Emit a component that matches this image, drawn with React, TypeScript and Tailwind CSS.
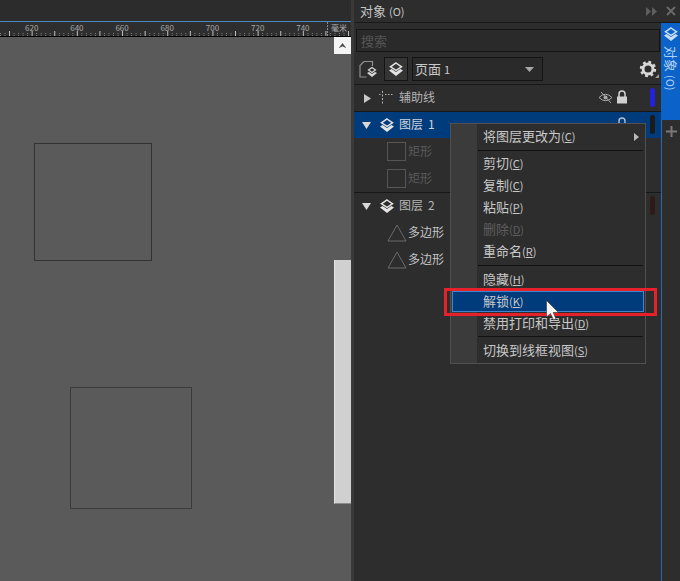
const FONT = 'font-["Noto_Sans_CJK_SC","Noto_Sans",sans-serif]';

function Layers({ className = "", color = "#e4e4e4" }: { className?: string; color?: string }) {
  return (
    <svg width="16" height="15" viewBox="0 0 16 15" className={className}>
      <path d="M8 1 L13.5 4.8 L8 8.4 L2.5 4.8 Z" fill="none" stroke={color} strokeWidth="1.5" />
      <path d="M1 8.6 L3.6 6.9 L8 9.9 L12.4 6.9 L15 8.6 L8 14 Z" fill={color} />
    </svg>
  );
}

function Ruler() {
  const labels = [620, 640, 660, 680, 700, 720, 740];
  return (
    <div className="relative h-[15px] bg-[#2e2e2e] border-b border-black overflow-hidden">
      {labels.map((l, i) => (
        <span
          key={l}
          className="absolute top-[1px] text-[8px] leading-[10px] text-[#a8a8a8]"
          style={{ left: 25 + i * 45.2 }}
        >
          {l}
        </span>
      ))}
      <svg width="351" height="15" className="absolute left-0 top-0">
        {Array.from({ length: 78 }).map((_, i) => (
          <line
            key={i}
            x1={i * 4.52 + 0.5}
            x2={i * 4.52 + 0.5}
            y1={i % 5 === 2 ? 9 : 11}
            y2={14}
            stroke={i % 5 === 2 ? "#c0c0c0" : "#808080"}
            strokeWidth="1"
            strokeDasharray={i % 5 === 2 ? undefined : "1 1"}
          />
        ))}
        <line x1="327.5" x2="327.5" y1="0" y2="15" stroke="#8a8a8a" strokeDasharray="2 1" />
      </svg>
      <span className="absolute left-[331px] top-[0px] text-[8px] leading-[11px] text-[#b4b4b4] bg-[#2e2e2e]">毫米</span>
    </div>
  );
}

function Canvas() {
  return (
    <div className="relative flex-1 bg-[#5a5a5a]">
      <div className="absolute left-[34px] top-[106px] w-[118px] h-[118px] border border-[#333]" />
      <div className="absolute left-[70px] top-[350px] w-[122px] h-[122px] border border-[#3a3a3a]" />
      <div className="absolute right-0 top-0 w-[17px] h-[17px] bg-[#f4f4f4] flex items-center justify-center">
        <svg width="7" height="5" viewBox="0 0 7 5">
          <path d="M0.5 4.5 L3.5 0.5 L6.5 4.5 L3.5 3 Z" fill="#444" stroke="#444" strokeWidth="0.6" />
        </svg>
      </div>
      <div className="absolute right-0 top-[223px] w-[17px] h-[244px] bg-[#d0d0d0] border-l border-[#e4e4e4] border-b-[#8a8a8a] border-b" />
    </div>
  );
}

function Row({
  h,
  blue,
  arrow,
  icon,
  label,
  num,
  labelCls,
  bar,
  right,
}: {
  h: string;
  blue?: boolean;
  arrow?: "right" | "down";
  icon: React.ReactNode;
  label: string;
  num?: string;
  labelCls: string;
  bar?: string;
  right?: React.ReactNode;
}) {
  return (
    <div className={`relative flex items-center ${h} ${blue ? "bg-[#003b7c]" : ""} border-t border-[#171717]`}>
      <div className="w-[22px] flex justify-end pr-[5px] shrink-0">
        {arrow === "right" && (
          <svg width="7" height="9" viewBox="0 0 7 9"><path d="M0 0 L7 4.5 L0 9 Z" fill="#c8c8c8" /></svg>
        )}
        {arrow === "down" && (
          <svg width="9" height="7" viewBox="0 0 9 7"><path d="M0 0 H9 L4.5 7 Z" fill="#d8d8d8" /></svg>
        )}
      </div>
      {icon}
      <span className={`${labelCls} ml-[1px] text-[12px] leading-[14px] pb-[2px] whitespace-nowrap`}>
        {label}
        {num && <span className="ml-[5px]">{num}</span>}
      </span>
      {right}
      {bar && <div className={`absolute left-[296px] top-[3px] w-[5px] h-[19px] rounded-full ${bar}`} />}
    </div>
  );
}

function ShapeRow({ tri, label }: { tri?: boolean; label: string }) {
  return (
    <div className="flex items-center h-[27px] pl-[33px]">
      {tri ? (
        <svg width="20" height="18" viewBox="0 0 20 18" className="mr-[1px]">
          <path d="M10 1 L19 17 H1 Z" fill="none" stroke="#6a6a6a" strokeWidth="1" />
        </svg>
      ) : (
        <div className="w-[19px] h-[19px] border border-[#555] mr-[2px]" />
      )}
      <span className={`text-[12px] leading-[14px] pb-[2px] ${tri ? "text-[#c4c4c4]" : "text-[#5a5a5a]"}`}>{label}</span>
    </div>
  );
}

function MI({
  t,
  k,
  h = "h-[22px]",
  dim,
  hl,
}: {
  t: string;
  k: string;
  h?: string;
  dim?: boolean;
  hl?: boolean;
}) {
  return (
    <div className={`relative flex items-center shrink-0 ${h}`}>
      {hl && <div className="absolute left-[-31px] top-0 w-[192px] h-[21px] bg-[#003b7c] border border-[#3f86cc]" />}
      <span className={`relative pb-[2px] text-[13px] leading-[18px] whitespace-nowrap ${dim ? "text-[#5e5e5e]" : "text-[#c8c8c8]"}`}>
        {t}
        <span className="text-[11px]">(<span className="underline">{k}</span>)</span>
      </span>
    </div>
  );
}

function Sep() {
  return <div className="h-px shrink-0 bg-[#111] ml-[1px] mr-[2px]" />;
}

function Menu() {
  return (
    <div className="absolute left-[450px] top-[123px] w-[196px] h-[241px] bg-[#2d2d2d] border border-[#505050] flex">
      <div className="w-[26px] bg-[#3b3b3b] shrink-0" />
      <div className="flex-1 flex flex-col">
        <div className="pl-[6px] flex items-center h-[26px] shrink-0 relative">
          <span className="pb-[2px] text-[13px] leading-[18px] text-[#c8c8c8]">
            将图层更改为<span className="text-[11px]">(<span className="underline">C</span>)</span>
          </span>
          <svg width="5" height="8" viewBox="0 0 5 8" className="absolute right-[6px] top-[9px]"><path d="M0 0 L5 4 L0 8 Z" fill="#b8b8b8" /></svg>
        </div>
        <Sep />
        <div className="pl-[6px] pt-[2px] pb-[2px] shrink-0">
          <MI t="剪切" k="C" />
          <MI t="复制" k="C" />
          <MI t="粘贴" k="P" />
          <MI t="删除" k="D" dim />
          <MI t="重命名" k="R" />
        </div>
        <Sep />
        <div className="pl-[6px] pt-[3px] pb-[1px] shrink-0">
          <MI t="隐藏" k="H" />
          <MI t="解锁" k="K" hl />
          <MI t="禁用打印和导出" k="D" />
        </div>
        <Sep />
        <div className="pl-[6px] pt-[1px] shrink-0">
          <MI t="切换到线框视图" k="S" h="h-[25px]" />
        </div>
      </div>
    </div>
  );
}

export default function App() {
  return (
    <div className={`relative flex w-[680px] h-[581px] overflow-hidden bg-[#2d2d2d] ${FONT}`}>
      <div className="w-[351px] flex flex-col shrink-0">
        <div className="h-[21px] bg-[#2c2c2c]" />
        <div className="h-px bg-[#4a8ac4]" />
        <Ruler />
        <Canvas />
      </div>
      <div className="w-[3px] bg-[#3a3a3a] shrink-0" />

      <div className="flex-1 flex flex-col min-w-0">
        <div className="h-[22px] flex items-center pl-[6px] pr-[4px] shrink-0">
          <span className="text-[13px] leading-[18px] text-[#c4c4c4]">
            对象 <span className="text-[11px]">(O)</span>
          </span>
          <div className="ml-auto flex items-center gap-[9px]">
            <svg width="11" height="9" viewBox="0 0 11 9"><path d="M0 0 L5 4.5 L0 9 Z M6 0 L11 4.5 L6 9 Z" fill="#5e5e5e" /></svg>
            <svg width="10" height="10" viewBox="0 0 10 10"><path d="M1 1 L9 9 M9 1 L1 9" stroke="#6a6a6a" strokeWidth="1.8" /></svg>
          </div>
        </div>
        <div className="h-px bg-[#1a1a1a] shrink-0" />

        <div className="flex-1 flex min-h-0">
          <div className="w-[307px] shrink-0 flex flex-col bg-[#2d2d2d]">
            <div className="pl-[2px] pr-[1px] pt-[6px]">
              <div className="h-[23px] bg-[#2a2a2a] border border-[#151515] flex items-center pl-[4px] text-[13px] leading-[18px] text-[#555]">
                搜索
              </div>
            </div>
            <div className="flex items-center h-[24px] mt-[5px] pl-[5px]">
              <svg width="20" height="20" viewBox="0 0 20 20" className="mr-[5px]">
                <path d="M5 2.5 H13.5 V7 M5 2.5 L1 6.5 V18 H7.5" fill="none" stroke="#909090" strokeWidth="1.2" />
                <path d="M13 8.5 L16.5 11 L13 13.5 L9.5 11 Z" fill="none" stroke="#d8d8d8" strokeWidth="1.2" />
                <path d="M8 14 L10 13 L13 15 L16 13 L18 14 L13 18 Z" fill="#d8d8d8" />
              </svg>
              <div className="w-[24px] h-[24px] border border-[#141414] bg-[#353535] flex items-center justify-center mr-[4px]">
                <Layers />
              </div>
              <div className="w-[131px] h-[24px] border border-[#141414] bg-[#2a2a2a] flex items-center pl-[2px] relative">
                <span className="text-[13px] leading-[18px] text-[#c8c8c8]">页面 <span className="text-[11px]">1</span></span>
                <svg width="9" height="5" viewBox="0 0 9 5" className="absolute right-[8px] top-[9px]"><path d="M0 0 H9 L4.5 5 Z" fill="#a8a8a8" /></svg>
              </div>
              <div className="ml-auto mr-[2px] relative pr-[2px]">
                <svg width="18" height="18" viewBox="0 0 20 20" className="block">
                  <circle cx="10" cy="10" r="5.5" fill="none" stroke="#d8d8d8" strokeWidth="3.2" />
                  <circle cx="10" cy="10" r="7.6" fill="none" stroke="#d8d8d8" strokeWidth="3" strokeDasharray="3 3" />
                </svg>
                <svg width="4" height="4" viewBox="0 0 4 4" className="absolute right-0 bottom-0"><path d="M4 0 V4 H0 Z" fill="#9a9a9a" /></svg>
              </div>
            </div>
            <div className="h-[3px]" />
            <Row
              h="h-[27px]"
              arrow="right"
              labelCls="text-[#b4b4b4]"
              label="辅助线"
              icon={
                <svg width="16" height="14" viewBox="0 0 16 14" className="mr-[3px] ml-[3px] shrink-0">
                  <path d="M0 3.5 H2 M6 3.5 H14" stroke="#b0b0b0" strokeDasharray="1.5 1.5" />
                  <path d="M3.5 0 V14" stroke="#b0b0b0" strokeDasharray="2 1.5" />
                </svg>
              }
              bar="bg-[#2222dd]"
              right={
                <div className="absolute left-[244px] top-[5px] flex items-center gap-[3px]">
                  <svg width="15" height="13" viewBox="0 0 15 13">
                    <path d="M1 6.5 Q7.5 0 14 6.5 Q7.5 13 1 6.5 Z" fill="none" stroke="#a8a8a8" strokeWidth="1" />
                    <circle cx="7.5" cy="6.5" r="2" fill="#a8a8a8" />
                    <path d="M3 1 L13 12" stroke="#a8a8a8" strokeWidth="1" />
                  </svg>
                  <svg width="12" height="14" viewBox="0 0 12 14">
                    <path d="M3 7 V4 a3 3 0 0 1 6 0 V7" fill="none" stroke="#d0d0d0" strokeWidth="1.5" />
                    <rect x="1" y="6.5" width="10" height="7" fill="#d0d0d0" />
                  </svg>
                </div>
              }
            />
            <Row
              blue
              h="h-[27px]"
              arrow="down"
              labelCls="text-[#d0d4dc]"
              label="图层"
              num="1"
              icon={<Layers className="mr-[3px] ml-[3px] shrink-0" />}
              bar="bg-[#1a1a1a]"
              right={
                <svg width="10" height="8" viewBox="0 0 10 8" className="absolute left-[263px] top-[5px]">
                  <path d="M2 8 V4 a3 3 0 0 1 6 0 V8" fill="none" stroke="#b8c0cc" strokeWidth="1.4" />
                </svg>
              }
            />
            <ShapeRow label="矩形" />
            <ShapeRow label="矩形" />
            <Row
              h="h-[27px]"
              arrow="down"
              labelCls="text-[#b4b4b4]"
              label="图层"
              num="2"
              icon={<Layers className="mr-[3px] ml-[3px] shrink-0" />}
              bar="bg-[#2e1a18]"
            />
            <ShapeRow tri label="多边形" />
            <ShapeRow tri label="多边形" />
          </div>

          <div className="flex-1 flex flex-col items-stretch">
            <div className="h-[97px] bg-[#0b63c9] flex flex-col items-center pt-[4px] shrink-0">
              <Layers color="#c8dcf4" />
              <span className="mt-[4px] text-[13px] leading-[14px] text-[#b4d0f0] [writing-mode:vertical-rl] [text-orientation:sideways]">
                对象 <span className="text-[11px]">(O)</span>
              </span>
            </div>
            <div className="flex-1 border-l border-[#2a6cb4] flex justify-center pt-[5px]">
              <svg width="13" height="13" viewBox="0 0 13 13">
                <path d="M6.5 1 V12 M1 6.5 H12" stroke="#7a7a7a" strokeWidth="2" />
              </svg>
            </div>
          </div>
        </div>
      </div>

      <Menu />

      <div className="absolute left-[444px] top-[288px] w-[213px] h-[28px] border-[3px] border-[#e8202a]" />
      <svg width="16" height="24" viewBox="0 0 16 24" className="absolute left-[546px] top-[300px]">
        <path d="M0.5 0.5 V17 L4.5 13.5 L7.5 20 L10 19 L7.2 12.5 L12.5 12.5 Z" fill="#f4f4f4" stroke="#333" strokeWidth="0.6" />
      </svg>
    </div>
  );
}
